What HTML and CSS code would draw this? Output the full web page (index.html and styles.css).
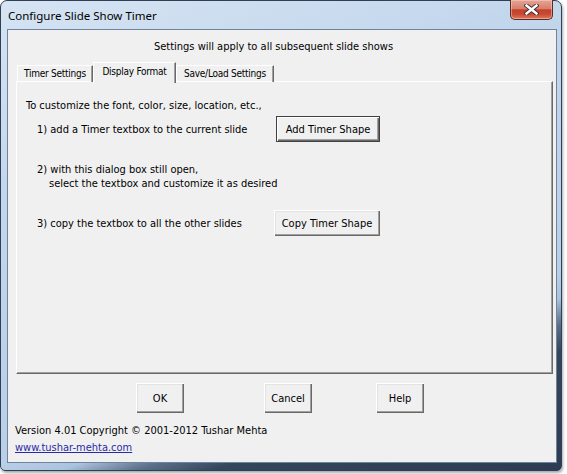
FILE: index.html
```html
<!DOCTYPE html>
<html>
<head>
<meta charset="utf-8">
<link rel="stylesheet" href="styles.css">
</head>
<body>
<div class="window">
  <div class="titlebar">
    <span class="title">Configure Slide Show Timer</span>
    <div class="close">
      <svg width="15" height="11" viewBox="0 0 15 11">
        <path d="M2.5 1.5 L12.5 9.5 M12.5 1.5 L2.5 9.5" stroke="#3a3030" stroke-width="4.2" stroke-linecap="square"/>
        <path d="M2.5 1.5 L12.5 9.5 M12.5 1.5 L2.5 9.5" stroke="#ffffff" stroke-width="2.4" stroke-linecap="square"/>
      </svg>
    </div>
  </div>
  <div class="client">
    <div class="note">Settings will apply to all subsequent slide shows</div>
    <div class="tabs">
      <div class="tab t1">Timer Settings</div>
      <div class="tab active">Display Format</div>
      <div class="tab t3">Save/Load Settings</div>
    </div>
    <div class="panel">
      <div class="intro">To customize the font, color, size, location, etc.,</div>
      <div class="steps">
        <div class="step s1">1) add a Timer textbox to the current slide</div>
        <button class="btn add default">Add Timer Shape</button>
        <div class="step s2">2) with this dialog box still open,<br><span class="indent">select the textbox and customize it as desired</span></div>
        <div class="step s3">3) copy the textbox to all the other slides</div>
        <button class="btn copy">Copy Timer Shape</button>
      </div>
    </div>
    <div class="actions">
      <button class="btn ok">OK</button>
      <button class="btn cancel">Cancel</button>
      <button class="btn help">Help</button>
    </div>
    <div class="footer">
      <div class="version">Version 4.01 Copyright © 2001-2012 Tushar Mehta</div>
      <a class="link" href="#">www.tushar-mehta.com</a>
    </div>
  </div>
</div>
</body>
</html>
```
FILE: styles.css
```css
html, body {
  margin: 0;
  padding: 0;
  background: #ffffff;
}
body {
  width: 567px;
  height: 474px;
  overflow: hidden;
  font-family: "DejaVu Sans Condensed", "DejaVu Sans", sans-serif;
  font-stretch: condensed;
  font-size: 11px;
  color: #000;
}
.window {
  box-sizing: border-box;
  width: 562px;
  height: 471px;
  border: 1px solid #2f3f55;
  border-radius: 7px 7px 5px 5px;
  padding: 0 4px 7px 6px;
  display: flex;
  flex-direction: column;
  background: linear-gradient(161deg, #d6e4f3 0%, #c2d6ec 30%, #b9cfe8 70%, #aac3de 74%, #5a6f88 78%, #34465c 82%, #2c3c52 100%);
  box-shadow: 1px 2px 3px rgba(0,0,0,0.35);
}
.titlebar {
  height: 28px;
  display: flex;
  align-items: flex-start;
  justify-content: space-between;
}
.title {
  font-family: "Noto Sans", sans-serif;
  font-stretch: normal;
  font-size: 11.5px;
  line-height: 16px;
  margin-top: 7px;
  padding-left: 1px;
  color: #000;
}
.close {
  box-sizing: border-box;
  width: 43px;
  height: 20px;
  margin-top: -1px;
  margin-right: 4px;
  border: 1px solid #5b2a22;
  border-top: none;
  border-radius: 0 0 5px 5px;
  background: linear-gradient(#e4a596 0%, #d7806c 45%, #c4402a 52%, #c84a33 75%, #e07a5c 100%);
  box-shadow: inset 0 0 0 1px rgba(255,220,210,0.45);
  display: flex;
  align-items: center;
  justify-content: center;
}
.client {
  flex: 1;
  border: 1px solid #6f849c;
  background: #f0f0f0;
  display: flex;
  flex-direction: column;
}
.note {
  text-align: center;
  padding-right: 17px;
  margin-top: 10px;
  line-height: 13px;
}
.tabs {
  display: flex;
  margin-top: 8px;
  margin-left: 9px;
  height: 20px;
  align-items: flex-end;
  position: relative;
  z-index: 1;
}
.tab {
  box-sizing: border-box;
  height: 17px;
  line-height: 16px;
  padding: 0;
  font-size: 10px;
  letter-spacing: -0.25px;
  white-space: nowrap;
  text-align: center;
  border-top: 1px solid #ffffff;
  border-left: 1px solid #ffffff;
  border-right: 1px solid #696969;
  box-shadow: inset -1px 0 0 #a0a0a0;
  margin-bottom: -1px;
}
.t1 {
  width: 76px;
}
.tab.active {
  height: 21px;
  width: 83px;
  line-height: 17px;
  background: #f0f0f0;
  margin-bottom: -2px;
}
.t3 {
  width: 98px;
}
.panel {
  box-sizing: border-box;
  height: 293px;
  margin-left: 8px;
  margin-right: 3px;
  border-top: 1px solid #ffffff;
  border-left: 1px solid #ffffff;
  border-right: 1px solid #696969;
  border-bottom: 1px solid #696969;
  box-shadow: inset -1px -1px 0 #a0a0a0;
  background: #f0f0f0;
  padding: 17px 0 0 9px;
}
.intro {
  line-height: 13px;
}
.steps {
  display: grid;
  grid-template-columns: 237px 106px;
  align-items: center;
  margin-top: 4px;
  padding-left: 11px;
}
.step {
  line-height: 14px;
}
.s1, .s3 {
  padding-top: 1px;
}
.s2 {
  grid-column: 1 / 3;
  margin-top: 21px;
  margin-bottom: 19px;
}
.indent {
  padding-left: 12px;
}
.btn {
  box-sizing: border-box;
  font: inherit;
  font-family: "DejaVu Sans Condensed", "DejaVu Sans", sans-serif;
  font-stretch: condensed;
  font-size: 11px;
  color: #000;
  background: #f0f0f0;
  border: none;
  padding: 0;
  margin: 0;
  box-shadow: inset 1px 1px 0 #ffffff, inset -1px -1px 0 #696969, inset -2px -2px 0 #a0a0a0, inset 2px 2px 0 #e3e3e3;
}
.btn.default {
  box-shadow: inset 0 0 0 1px #404040, inset 2px 2px 0 #ffffff, inset -2px -2px 0 #696969, inset -3px -3px 0 #a0a0a0;
}
.add {
  justify-self: end;
  width: 104px;
  height: 26px;
}
.copy {
  width: 106px;
  height: 26px;
}
.actions {
  display: flex;
  margin-top: 9px;
  height: 30px;
}
.actions .btn {
  width: 48px;
  height: 30px;
}
.ok { margin-left: 128px; }
.cancel { margin-left: 80px; }
.help { margin-left: 64px; }
.footer {
  margin-top: 11px;
  padding-left: 7px;
  display: flex;
  flex-direction: column;
  align-items: flex-start;
}
.version {
  line-height: 14px;
}
.link {
  margin-top: 3px;
  line-height: 14px;
  color: #2a2aa8;
  text-decoration: underline;
}
```
